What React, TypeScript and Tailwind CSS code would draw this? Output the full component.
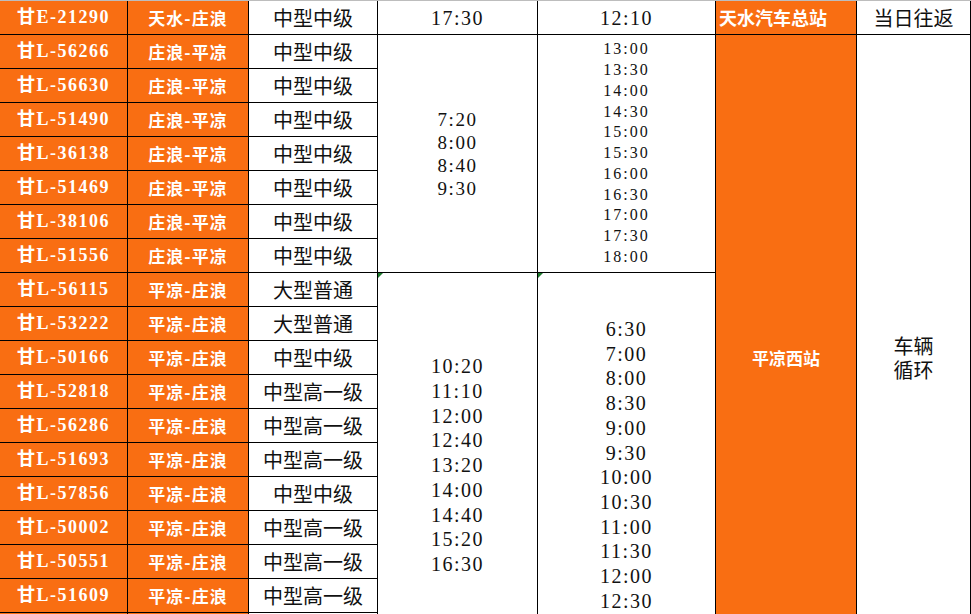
import React from "react";

const ORANGE = "bg-[#f96e12]";

const rows: [string, string, string][] = [
  ["甘E-21290", "天水-庄浪", "中型中级"],
  ["甘L-56266", "庄浪-平凉", "中型中级"],
  ["甘L-56630", "庄浪-平凉", "中型中级"],
  ["甘L-51490", "庄浪-平凉", "中型中级"],
  ["甘L-36138", "庄浪-平凉", "中型中级"],
  ["甘L-51469", "庄浪-平凉", "中型中级"],
  ["甘L-38106", "庄浪-平凉", "中型中级"],
  ["甘L-51556", "庄浪-平凉", "中型中级"],
  ["甘L-56115", "平凉-庄浪", "大型普通"],
  ["甘L-53222", "平凉-庄浪", "大型普通"],
  ["甘L-50166", "平凉-庄浪", "中型中级"],
  ["甘L-52818", "平凉-庄浪", "中型高一级"],
  ["甘L-56286", "平凉-庄浪", "中型高一级"],
  ["甘L-51693", "平凉-庄浪", "中型高一级"],
  ["甘L-57856", "平凉-庄浪", "中型中级"],
  ["甘L-50002", "平凉-庄浪", "中型高一级"],
  ["甘L-50551", "平凉-庄浪", "中型高一级"],
  ["甘L-51609", "平凉-庄浪", "中型高一级"],
  ["", "", ""],
  ["", "", ""],
];

const rowStart = [
  "row-start-1", "row-start-2", "row-start-3", "row-start-4", "row-start-5",
  "row-start-6", "row-start-7", "row-start-8", "row-start-9", "row-start-10",
  "row-start-11", "row-start-12", "row-start-13", "row-start-14", "row-start-15",
  "row-start-16", "row-start-17", "row-start-18", "row-start-19", "row-start-20",
];

const g1a = ["7:20", "8:00", "8:40", "9:30"];
const g1b = ["13:00", "13:30", "14:00", "14:30", "15:00", "15:30", "16:00", "16:30", "17:00", "17:30", "18:00"];
const g2a = ["10:20", "11:10", "12:00", "12:40", "13:20", "14:00", "14:40", "15:20", "16:30"];
const g2b = ["6:30", "7:00", "8:00", "8:30", "9:00", "9:30", "10:00", "10:30", "11:00", "11:30", "12:00", "12:30"];

const serif = "font-['Liberation_Serif','Noto_Sans_CJK_SC',serif]";
const cjk = "font-['Noto_Sans_CJK_SC',sans-serif]";
const cell = "border-r border-b border-black flex items-center justify-center overflow-hidden";

function Tri() {
  return (
    <span className="absolute left-0 top-0 w-0 h-0 border-t-[5px] border-r-[5px] border-t-[#1e7a2e] border-r-transparent" />
  );
}

export default function App() {
  return (
    <div className="w-[971px] h-[614px] overflow-hidden bg-white">
      <div className="grid grid-cols-[128px_121px_129px_160px_178px_141px_114px] grid-rows-[repeat(20,34px)] border-t border-[#bdbdbd]">
        {rows.map((r, i) => (
          <React.Fragment key={i}>
            <div className={`${cell} ${ORANGE} col-start-1 ${rowStart[i]} text-white font-bold text-[18px] tracking-[1.5px] ${serif}`}>
              {r[0]}
            </div>
            <div className={`${cell} ${ORANGE} col-start-2 ${rowStart[i]} text-white font-bold text-[17px] tracking-[1px] ${cjk}`}>
              {r[1]}
            </div>
            <div className={`${cell} bg-white col-start-3 ${rowStart[i]} text-[#111] text-[20px] ${cjk}`}>
              {r[2]}
            </div>
          </React.Fragment>
        ))}

        {/* row 1 */}
        <div className={`${cell} col-start-4 row-start-1 text-[20px] tracking-[1.5px] text-[#111] ${serif}`}>17:30</div>
        <div className={`${cell} col-start-5 row-start-1 text-[20px] tracking-[1.5px] text-[#111] ${serif}`}>12:10</div>
        <div className={`border-r border-b border-black ${ORANGE} col-start-6 row-start-1 flex items-center justify-start pl-[3px] text-white font-bold text-[18px] ${cjk} overflow-hidden whitespace-nowrap`}>
          天水汽车总站
        </div>
        <div className={`${cell} col-start-7 row-start-1 text-[20px] text-[#111] ${cjk}`}>当日往返</div>

        {/* group 1 */}
        <div className={`${cell} col-start-4 row-start-2 row-span-7 flex-col text-[19px] leading-[23px] tracking-[1.5px] text-[#111] ${serif}`}>
          {g1a.map((t) => (
            <div key={t}>{t}</div>
          ))}
        </div>
        <div className={`${cell} col-start-5 row-start-2 row-span-7 flex-col text-[16px] leading-[20.8px] tracking-[2px] text-[#111] ${serif}`}>
          {g1b.map((t) => (
            <div key={t}>{t}</div>
          ))}
        </div>

        {/* orange station column */}
        <div className={`${cell} ${ORANGE} col-start-6 row-start-2 row-span-19 text-white font-bold text-[17px] ${cjk}`}>
          平凉西站
        </div>
        <div className={`${cell} col-start-7 row-start-2 row-span-19 flex-col text-[20px] leading-[24px] text-[#111] ${cjk}`}>
          <div>车辆</div>
          <div>循环</div>
        </div>

        {/* group 2 */}
        <div className={`border-r border-b border-black relative col-start-4 row-start-9 row-span-12 flex flex-col items-center justify-start pt-[81px] text-[20px] leading-[24.75px] tracking-[1.5px] text-[#111] ${serif}`}>
          <Tri />
          {g2a.map((t) => (
            <div key={t}>{t}</div>
          ))}
        </div>
        <div className={`border-r border-b border-black relative col-start-5 row-start-9 row-span-12 flex flex-col items-center justify-start pt-[44px] text-[20px] leading-[24.7px] tracking-[1.5px] text-[#111] ${serif}`}>
          <Tri />
          {g2b.map((t) => (
            <div key={t}>{t}</div>
          ))}
        </div>
      </div>
    </div>
  );
}
